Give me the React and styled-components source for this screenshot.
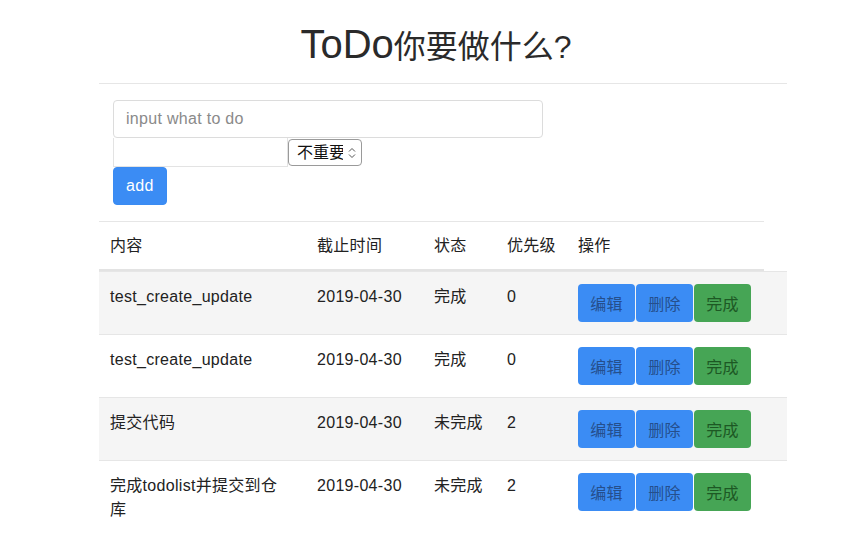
import React from 'react'
import styled, { createGlobalStyle } from 'styled-components'

const GlobalStyle = createGlobalStyle`
    html, body {
        margin: 0;
        padding: 0;
        background: #fff;
    }
    body {
        font-family: "Liberation Sans", "Noto Sans CJK SC", sans-serif;
        font-size: 16px;
        line-height: 24px;
        color: #333;
    }
`

const todos = [
    { content: 'test_create_update', date: '2019-04-30', status: '完成', level: 0 },
    { content: 'test_create_update', date: '2019-04-30', status: '完成', level: 0 },
    { content: '提交代码', date: '2019-04-30', status: '未完成', level: 2 },
    { content: '完成todolist并提交到仓库', date: '2019-04-30', status: '未完成', level: 2 },
]

const App = () => {
    return (
        <>
            <GlobalStyle />
            <Page>
                <Title>
                    ToDo<Cjk>你要做什么?</Cjk>
                </Title>
                <Form>
                    <TextInput placeholder='input what to do' />
                    <Line>
                        <DateInput />
                        <SelectWrap>
                            <Select defaultValue='0'>
                                <option value='0'>不重要</option>
                                <option value='1'>一般</option>
                                <option value='2'>重要</option>
                            </Select>
                            <Arrows width='8' height='12' viewBox='0 0 8 12'>
                                <path d='M1 4.5 L4 1.5 L7 4.5' fill='none' stroke='#555' strokeWidth='1' />
                                <path d='M1 7.5 L4 10.5 L7 7.5' fill='none' stroke='#555' strokeWidth='1' />
                            </Arrows>
                        </SelectWrap>
                    </Line>
                    <AddButton>add</AddButton>
                </Form>
                <Table>
                    <HeadRow>
                        <HeadCell>内容</HeadCell>
                        <HeadCell>截止时间</HeadCell>
                        <HeadCell>状态</HeadCell>
                        <HeadCell>优先级</HeadCell>
                        <HeadCell>操作</HeadCell>
                    </HeadRow>
                    {todos.map((t, i) => (
                        <Row key={i} striped={i % 2 === 0 ? 1 : 0}>
                            <Cell>{t.content}</Cell>
                            <Cell>{t.date}</Cell>
                            <Cell>{t.status}</Cell>
                            <Cell>{t.level}</Cell>
                            <ActionCell>
                                <ActionButton color='blue'>编辑</ActionButton>
                                <ActionButton color='blue'>删除</ActionButton>
                                <ActionButton color='green'>完成</ActionButton>
                            </ActionCell>
                        </Row>
                    ))}
                </Table>
            </Page>
        </>
    )
}

const Page = styled.div`
    width: 688px;
    margin-left: 99px;
`

const Title = styled.h1`
    margin: 0;
    padding: 21px 14px 13px 0;
    text-align: center;
    font-size: 40px;
    line-height: 46px;
    font-weight: 400;
    color: #2a2a2a;
    border-bottom: 1px solid #e6e6e6;
`

const Cjk = styled.span`
    font-size: 32px;
`

const Form = styled.div`
    padding: 16px 14px 16px;
    display: flex;
    flex-direction: column;
    align-items: flex-start;
`

const TextInput = styled.input`
    box-sizing: border-box;
    width: 430px;
    height: 38px;
    border: 1px solid #dcdcdc;
    border-radius: 4px;
    padding: 0 12px;
    font-family: inherit;
    font-size: 16px;
    letter-spacing: 0.3px;
    color: #333;
    outline: none;
    &::placeholder {
        color: #8a8a8a;
    }
`

const Line = styled.div`
    display: flex;
    align-items: center;
`

const DateInput = styled.input`
    box-sizing: border-box;
    width: 175px;
    height: 29px;
    border: 1px solid #e3e3e3;
    border-top: none;
    padding: 0 6px;
    outline: none;
`

const SelectWrap = styled.span`
    position: relative;
    display: inline-block;
`

const Select = styled.select`
    appearance: none;
    box-sizing: border-box;
    width: 74px;
    height: 27px;
    border: 1px solid #9a9a9a;
    border-radius: 4px;
    background: #fff;
    padding: 0 18px 0 8px;
    font-family: "Liberation Sans", "Noto Sans CJK SC", sans-serif;
    font-size: 16px;
    color: #111;
    outline: none;
`

const Arrows = styled.svg`
    position: absolute;
    right: 6px;
    top: 8px;
    pointer-events: none;
`

const AddButton = styled.button`
    box-sizing: border-box;
    height: 38px;
    padding: 0 12px;
    border: 1px solid #3a8bf2;
    border-radius: 4px;
    background: #3b8cf4;
    color: #fff;
    font-family: inherit;
    font-size: 16px;
    letter-spacing: 0.3px;
`

const Table = styled.div`
    display: flex;
    flex-direction: column;
    letter-spacing: 0.3px;
`

const grid = `
    display: grid;
    grid-template-columns: 207px 117px 73px 71px 1fr;
`

const HeadRow = styled.div`
    ${grid}
    margin-right: 23px;
    border-top: 1px solid #e6e6e6;
    border-bottom: 2px solid #e3e3e3;
    color: #222;
`

const Row = styled.div`
    ${grid}
    border-top: 1px solid #e6e6e6;
    background: ${p => (p.striped ? '#f5f5f5' : '#fff')};
    color: #222;
`

const Cell = styled.div`
    padding: 13px 11px 12px;
    min-height: 24px;
    &:first-child {
        padding-right: 20px;
    }
`

const HeadCell = styled.div`
    padding: 12px 11px 11px;
`

const ActionCell = styled.div`
    padding: 12px 11px;
    display: flex;
    gap: 1px;
    align-items: flex-start;
`

const ActionButton = styled.button`
    box-sizing: border-box;
    height: 38px;
    width: 57px;
    padding: 0;
    border: none;
    border-radius: 4px;
    font-family: inherit;
    font-size: 16px;
    letter-spacing: 0.3px;
    background: ${p => (p.color === 'green' ? '#46a555' : '#3b8cf4')};
    color: ${p => (p.color === 'green' ? '#1d5824' : '#254f8c')};
`

export default App
